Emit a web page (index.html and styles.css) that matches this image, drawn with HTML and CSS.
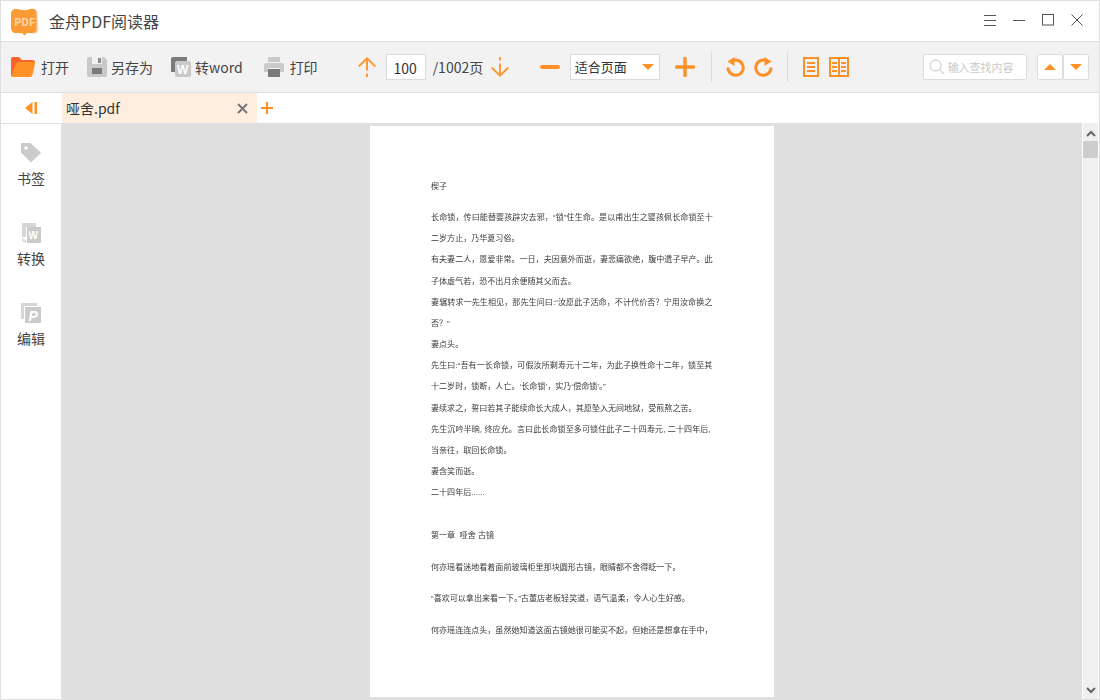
FILE: index.html
```html
<!DOCTYPE html>
<html lang="zh">
<head>
<meta charset="utf-8">
<title>金舟PDF阅读器</title>
<link rel="stylesheet" href="styles.css">
</head>
<body>
<div class="app">
  <header class="titlebar">
    <svg class="logo" width="28" height="28" viewBox="0 0 28 28"><path d="M21 1C24 .5 26 2 26.500 4L27.500 21C27.500 24 26 25.500 23 25.500L20 25.500Z" fill="#fcd9b4"/><path d="M0 6C0 3 2 1 5 1C9 1 12 3 16 2C19 .8 22 .2 24 1.500C25.500 3 25.500 5 25.500 8L25.500 21C25.500 24 24 25 21 25L16 25L13.500 27.500L11 25L5 25C2 25 0 23 0 20Z" fill="#fc9a35"/><text x="3.500" y="17.500" class="logo-text">PDF</text></svg>
    <span class="app-name">金舟PDF阅读器</span>
    <div class="win-controls">
      <svg width="12" height="12" viewBox="0 0 12 12"><path d="M0 1.500H12M0 6.500H12M0 11.500H12" stroke="#555" fill="none"/></svg>
      <svg width="12" height="12" viewBox="0 0 12 12"><path d="M0 6.500H12" stroke="#555" fill="none"/></svg>
      <svg width="12" height="12" viewBox="0 0 12 12"><rect x=".5" y=".5" width="11" height="10.500" stroke="#555" fill="none"/></svg>
      <svg width="12" height="12" viewBox="0 0 12 12"><path d="M.5 .5L11.500 11.500M11.500 .5L.5 11.500" stroke="#555" fill="none"/></svg>
    </div>
  </header>

  <nav class="toolbar">
    <div class="tool tool-open">
      <svg width="24" height="20" viewBox="0 0 24 20"><path d="M0 2C0 .8 .8 0 2 0H8L11 3H21C23 3 24 4 24 5V6H6L2 19H1C.4 19 0 18.500 0 18Z" fill="#f8642a"/><path d="M5 7C5.500 5.800 6 5 7.500 5H22.500C23.800 5 24.200 6 24 7L21.500 18C21.200 19.400 20.300 20 19 20H2C.5 20 0 19 .5 18Z" fill="#fe9126"/></svg>
      <span>打开</span>
    </div>
    <div class="tool tool-save">
      <svg width="20" height="20" viewBox="0 0 20 20"><path d="M2 0H17L20 3V18C20 19.200 19.200 20 18 20H2C.8 20 0 19.200 0 18V2C0 .8 .8 0 2 0Z" fill="#c9c9c9"/><rect x="5" y="0" width="10" height="7" fill="#f2f2f2"/><rect x="11" y="1" width="3" height="5" fill="#8a8a8a"/><rect x="5" y="11" width="10" height="6" fill="#7b7b7b"/></svg>
      <span>另存为</span>
    </div>
    <div class="tool tool-word">
      <svg width="20" height="20" viewBox="0 0 20 20"><path d="M2 0H16V4H5V15H0V2C0 .8 .8 0 2 0Z" fill="#7b7b7b"/><rect x="4" y="4" width="16" height="16" rx="2" fill="#c9c9c9"/><text x="6" y="17" class="w-text">W</text></svg>
      <span>转word</span>
    </div>
    <div class="tool tool-print">
      <svg width="20" height="20" viewBox="0 0 20 20"><path d="M5 0H15C15.600 0 16 .4 16 1V5H4V1C4 .4 4.400 0 5 0Z" fill="#c9c9c9"/><path d="M2 6H18C19 6 20 7 20 8V15H16V11H4V15H0V8C0 7 1 6 2 6Z" fill="#c9c9c9"/><rect x="4" y="12" width="12" height="8" fill="#7b7b7b"/></svg>
      <span>打印</span>
    </div>

    <svg class="i-up" width="18" height="20" viewBox="0 0 18 20"><path d="M.7 9.500L9 1.400L17.300 9.500M9 2V13.500M9 16.500V20" stroke="#fe9a36" stroke-width="2" fill="none"/></svg>
    <div class="page-input">100</div>
    <span class="page-total">/1002页</span>
    <svg class="i-down" width="18" height="20" viewBox="0 0 18 20"><path d="M.7 10.500L9 18.600L17.300 10.500M9 18V6.500M9 3.500V0" stroke="#fe9a36" stroke-width="2" fill="none"/></svg>

    <div class="i-minus"></div>
    <div class="zoom-select"><span>适合页面</span><i class="caret caret-down"></i></div>
    <svg class="i-plus" width="20" height="20" viewBox="0 0 20 20"><path d="M1.500 10H18.500M10 1.500V18.500" stroke="#fe9126" stroke-width="3.400" stroke-linecap="round" fill="none"/></svg>
    <div class="sep sep-a"></div>
    <svg class="i-undo" width="19" height="20" viewBox="0 0 19 20"><path d="M5 4.600A7.600 7.600 0 1 1 2 10.500" stroke="#fe9126" stroke-width="3" fill="none"/><path d="M8.500 0V9L1.500 4.500Z" fill="#fe9126"/></svg>
    <svg class="i-redo" width="19" height="20" viewBox="0 0 19 20"><path d="M14 4.600A7.600 7.600 0 1 0 17 10.500" stroke="#fe9126" stroke-width="3" fill="none"/><path d="M10.500 0V9L17.500 4.500Z" fill="#fe9126"/></svg>
    <div class="sep sep-b"></div>
    <svg class="i-single" width="16" height="20" viewBox="0 0 16 20"><rect x="1" y="1" width="14" height="18" stroke="#fe9126" stroke-width="2" fill="none"/><path d="M4 6H12M4 10H12M4 14H12" stroke="#fe9126" stroke-width="2"/></svg>
    <svg class="i-double" width="20" height="20" viewBox="0 0 20 20"><rect x="1" y="1" width="18" height="18" stroke="#fe9126" stroke-width="2" fill="none"/><path d="M10 1V19M3 6H8M3 10H8M3 14H8M12 6H17M12 10H17M12 14H17" stroke="#fe9126" stroke-width="2"/></svg>

    <div class="search">
      <svg width="16" height="16" viewBox="0 0 16 16"><circle cx="6.500" cy="6.500" r="5.500" stroke="#d4d4d4" fill="none" stroke-width="1.300"/><path d="M10.500 10.500L15 15" stroke="#d4d4d4" stroke-width="1.300"/></svg>
      <span>输入查找内容</span>
    </div>
    <div class="find-btn find-prev"><i class="caret caret-up"></i></div>
    <div class="find-btn"><i class="caret caret-down"></i></div>
  </nav>

  <div class="tabbar">
    <div class="tab-toggle">
      <svg width="12" height="12" viewBox="0 0 12 12"><path d="M7.500 0V12L0 6Z" fill="#fe9126"/><rect x="9.500" y="0" width="2.500" height="12" fill="#fe9126"/></svg>
    </div>
    <div class="tab">
      <span>哑舍.pdf</span>
      <svg width="11" height="11" viewBox="0 0 11 11"><path d="M1 1L10 10M10 1L1 10" stroke="#777" stroke-width="2" fill="none"/></svg>
    </div>
    <svg class="tab-add" width="12" height="12" viewBox="0 0 12 12"><path d="M0 6H12M6 0V12" stroke="#fe9126" stroke-width="2" fill="none"/></svg>
  </div>

  <div class="workspace">
    <aside class="sidebar">
      <div class="side-item">
        <svg width="22" height="22" viewBox="0 0 22 22"><path d="M1.500 1.500H10.500L20.500 11L11 20L1.500 10.500Z" fill="#cbcbcb" stroke="#cbcbcb" stroke-linejoin="round"/><circle cx="6" cy="6" r="1.800" fill="#fff"/></svg>
        <span>书签</span>
      </div>
      <div class="side-item">
        <svg width="22" height="22" viewBox="0 0 22 22"><path d="M2 1H16V5H6V15H2Z" fill="#d6d6d6"/><rect x="7" y="5" width="14" height="16" fill="#cbcbcb"/><path d="M3 16V19H6M4.500 17.500L6 19L4.500 20.500" stroke="#cbcbcb" fill="none"/><text x="8.500" y="17" class="side-w">W</text></svg>
        <span>转换</span>
      </div>
      <div class="side-item">
        <svg width="22" height="22" viewBox="0 0 22 22"><path d="M1 1H17V4H4V17H1Z" fill="#d6d6d6"/><rect x="5" y="5" width="16" height="16" fill="#cbcbcb"/><text x="8.500" y="18.500" class="side-p">P</text></svg>
        <span>编辑</span>
      </div>
    </aside>

    <main class="viewer">
      <article class="page">
        <p>楔子</p>
        <p class="gap-a"><span class="stretch">长命锁，传曰能替婴孩辟灾去邪，“锁”住生命。是以甫出生之婴孩佩长命锁至十</span><br>二岁方止，乃华夏习俗。<br>有夫妻二人，恩爱非常。一日，夫因意外而逝，妻悲痛欲绝，腹中遗子早产。此<br>子体虚气若，恐不出月余便随其父而去。<br><span class="stretch">妻辗转求一先生相见，那先生问曰:“汝愿此子活命，不计代价否？宁用汝命换之</span><br>否？”<br>妻点头。<br><span class="stretch">先生曰:“吾有一长命锁，可假汝所剩寿元十二年，为此子换性命十二年，锁至其</span><br>十二岁时，锁断，人亡。‘长命锁’，实乃‘偿命锁’。”<br>妻续求之，誓曰若其子能续命长大成人，其愿坠入无间地狱，受煎熬之苦。<br><span class="stretch">先生沉吟半晌, 终应允。言曰此长命锁至多可锁住此子二十四寿元, 二十四年后,</span><br>当亲往，取回长命锁。<br>妻含笑而逝。<br>二十四年后......</p>
        <p class="gap-b">第一章&nbsp;&nbsp;哑舍 古镜</p>
        <p class="gap-a">何亦瑶看迷地看着面前玻璃柜里那块圆形古镜，眼睛都不舍得眨一下。</p>
        <p class="gap-c">“喜欢可以拿出来看一下。”古董店老板轻笑道，语气温柔，令人心生好感。</p>
        <p class="gap-c">何亦瑶连连点头，虽然她知道这面古镜她很可能买不起，但她还是想拿在手中，</p>
      </article>
      <div class="scrollbar">
        <svg width="10" height="7" viewBox="0 0 10 7"><path d="M1 6L5 2L9 6" stroke="#666" stroke-width="2" fill="none"/></svg>
        <div class="thumb"></div>
        <svg class="scroll-down" width="10" height="7" viewBox="0 0 10 7"><path d="M1 1L5 5L9 1" stroke="#666" stroke-width="2" fill="none"/></svg>
      </div>
    </main>
  </div>
</div>
</body>
</html>
```

FILE: styles.css
```css
* { box-sizing: border-box; }
html, body { margin: 0; padding: 0; }
body {
  width: 1100px;
  height: 700px;
  overflow: hidden;
  background: #fff;
  font-family: "Noto Sans CJK SC", "Liberation Sans", sans-serif;
  color: #333;
}
.app {
  width: 1100px;
  height: 700px;
  display: flex;
  flex-direction: column;
  border: 1px solid #dedede;
}

/* title bar */
.titlebar {
  height: 41px;
  flex: none;
  display: flex;
  align-items: center;
  padding-left: 10px;
  border-bottom: 1px solid #dedede;
}
.logo { flex: none; margin-top: 1px; }
.logo-text { font: bold 10px "Liberation Sans", sans-serif; fill: #fcd9ad; letter-spacing: .4px; }
.app-name { margin-left: 10px; font-size: 16px; line-height: 22px; color: #444; }
.win-controls {
  margin-left: auto;
  margin-right: 16px;
  display: flex;
  gap: 17px;
  margin-top: -2px;
}
.win-controls svg { display: block; }

/* toolbar */
.toolbar {
  height: 51px;
  flex: none;
  display: flex;
  align-items: center;
  background: #f2f2f2;
  border-bottom: 1px solid #dedede;
  padding-left: 10px;
  padding-bottom: 1px;
  font-size: 14px;
  color: #444;
}
.toolbar svg { flex: none; display: block; }
.tool { display: flex; align-items: center; line-height: 20px; }
.tool span { margin-left: 6px; }
.tool-save { margin-left: 18px; }
.tool-save span { margin-left: 4px; }
.tool-word { margin-left: 18px; }
.tool-word span { margin-left: 4px; }
.tool-print { margin-left: 21px; }
.i-up { margin-left: 40px; }
.page-input {
  margin-left: 10px;
  width: 40px;
  height: 26px;
  background: #fff;
  border: 1px solid #dcdcdc;
  text-align: center;
  line-height: 26px;
  font-size: 14px;
  color: #333;
  padding-right: 1px;
}
.page-total { margin-left: 7px; line-height: 20px; width: 51px; white-space: nowrap; }
.i-down { margin-left: 7px; }
.i-minus {
  margin-left: 31px;
  width: 20px;
  height: 4px;
  border-radius: 2px;
  background: #fe9126;
}
.zoom-select {
  margin-left: 10px;
  width: 90px;
  height: 26px;
  background: #fff;
  border: 1px solid #dcdcdc;
  display: flex;
  align-items: center;
  justify-content: space-between;
  padding: 0 5px 0 4px;
  font-size: 13px;
  line-height: 24px;
  color: #333;
}
.caret { display: block; width: 0; height: 0; border-left: 6px solid transparent; border-right: 6px solid transparent; }
.caret-down { border-top: 6px solid #fe9126; }
.caret-up { border-bottom: 6px solid #fe9126; }
.i-plus { margin-left: 15px; }
.sep { width: 1px; height: 30px; background: #dcdcdc; }
.sep-a { margin-left: 16px; }
.i-undo { margin-left: 14px; }
.i-redo { margin-left: 9px; }
.sep-b { margin-left: 14px; }
.i-single { margin-left: 15px; }
.i-double { margin-left: 10px; }
.search {
  margin-left: 74px;
  width: 104px;
  height: 26px;
  background: #fff;
  border: 1px solid #dcdcdc;
  border-radius: 2px;
  display: flex;
  align-items: center;
  padding-left: 5px;
  font-size: 11px;
  line-height: 24px;
  color: #c8c8c8;
}
.search span { margin-left: 3px; white-space: nowrap; }
.find-btn {
  width: 26px;
  height: 26px;
  background: #fff;
  border: 1px solid #dcdcdc;
  border-radius: 2px;
  display: flex;
  align-items: center;
  justify-content: center;
}
.find-prev { margin-left: 10px; }

/* tabs */
.tabbar {
  height: 30px;
  flex: none;
  display: flex;
  align-items: center;
}
.tab-toggle {
  width: 61px;
  height: 30px;
  flex: none;
  display: flex;
  align-items: center;
  justify-content: center;
}
.tab-toggle svg { margin-right: 1px; margin-top: -1px; }
.tab {
  width: 195px;
  height: 30px;
  flex: none;
  display: flex;
  align-items: center;
  justify-content: space-between;
  padding: 0 9px 0 4px;
  background: #fdeee0;
  font-size: 14px;
  line-height: 20px;
  color: #333;
}
.tab-add { margin-left: 4px; }

/* main */
.workspace { flex: 1; min-height: 0; display: flex; }
.sidebar {
  width: 60px;
  flex: none;
  display: flex;
  flex-direction: column;
  align-items: center;
  border-top: 1px solid #dedede;
  padding-top: 18px;
  gap: 34px;
  background: #fff;
}
.side-item {
  display: flex;
  flex-direction: column;
  align-items: center;
  gap: 4px;
  font-size: 14px;
  line-height: 20px;
  color: #444;
}
.side-item svg { display: block; }
.w-text { font: bold 12px "Liberation Sans", sans-serif; fill: #fff; }
.side-w { font: bold 10px "Liberation Sans", sans-serif; fill: #fff; }
.side-p { font: italic bold 14px "Liberation Sans", sans-serif; fill: #fff; }
.viewer {
  flex: 1;
  min-width: 0;
  display: flex;
  justify-content: space-between;
  background: #dfdfdf;
}
.page {
  margin: 3px 0 0 309px;
  width: 404px;
  height: 571px;
  flex: none;
  background: #fff;
  padding: 50px 0 0 61px;
  font-family: "Liberation Sans", "Noto Sans CJK SC", sans-serif;
  font-size: 8.050px;
  line-height: 21.150px;
  color: #3a3a3a;
  white-space: nowrap;
  overflow: hidden;
}
.page p { margin: 0; filter: blur(.3px); }
.page .stretch { letter-spacing: .08px; }
.page .gap-a { margin-top: 10px; }
.page .gap-b { margin-top: 22px; }
.page .gap-c { margin-top: 10.500px; }
.scrollbar {
  width: 17px;
  flex: none;
  display: flex;
  flex-direction: column;
  align-items: center;
  background: #f0f0f0;
  border-left: 1px solid #fff;
  border-right: 1px solid #fff;
  padding-top: 7px;
}
.scrollbar svg { display: block; }
.thumb { width: 100%; height: 17px; margin-top: 4px; background: #cdcdcd; }
.scroll-down { margin-top: auto; margin-bottom: 5px; }
```
